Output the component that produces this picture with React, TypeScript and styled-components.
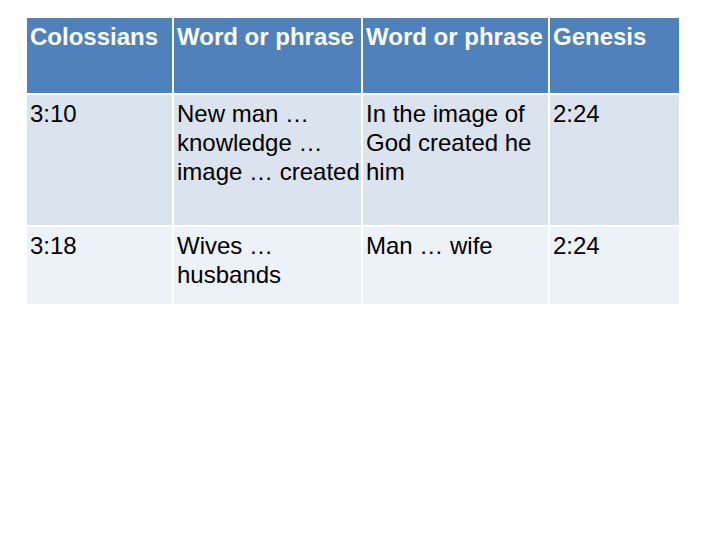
import styled, { createGlobalStyle } from "styled-components";

const Global = createGlobalStyle`
  html, body {
    margin: 0;
    background: #fff;
  }
  body {
    font-family: "Liberation Sans", Arial, sans-serif;
  }
`;

const HEAD = ["Colossians", "Word or phrase", "Word or phrase", "Genesis"];

// each cell is a list of lines, wrapped as in the slide
const ROWS = [
  {
    band: 1,
    cells: [
      ["3:10"],
      ["New man …", "knowledge …", "image … created"],
      ["In the image of", "God created he", "him"],
      ["2:24"],
    ],
  },
  {
    band: 2,
    cells: [["3:18"], ["Wives …", "husbands"], ["Man … wife"], ["2:24"]],
  },
];

export default function App() {
  return (
    <>
      <Global />
      <Page>
        <Table>
          {HEAD.map((t, i) => (
            <HeadCell key={i}>{t}</HeadCell>
          ))}
          {ROWS.map((r) =>
            r.cells.map((c, i) => (
              <Cell key={r.cells[0][0] + i} $band={r.band}>
                {c.map((line) => (
                  <Line key={line}>{line}</Line>
                ))}
              </Cell>
            ))
          )}
        </Table>
      </Page>
    </>
  );
}

const Page = styled.div`
  width: 720px;
  height: 540px;
  padding: 18px 0 0 27px;
  box-sizing: border-box;
`;
const Table = styled.div`
  display: grid;
  grid-template-columns: 145px 187px 185px 129px;
  grid-template-rows: 75px 130px 77px;
  gap: 2px;
  width: 652px;
  background: #fff;
`;
const HeadCell = styled.div`
  background: #4f81bd;
  color: #fff;
  font-weight: bold;
  font-size: 24px;
  line-height: 28.8px;
  padding: 5px 3px;
  white-space: nowrap;
`;
const Cell = styled.div<{ $band: number }>`
  background: ${(p) => (p.$band === 1 ? "#dbe3ef" : "#edf1f8")};
  color: #000;
  font-size: 24px;
  line-height: 28.8px;
  padding: 5px 3px;
`;
const Line = styled.div`
  white-space: nowrap;
`;
